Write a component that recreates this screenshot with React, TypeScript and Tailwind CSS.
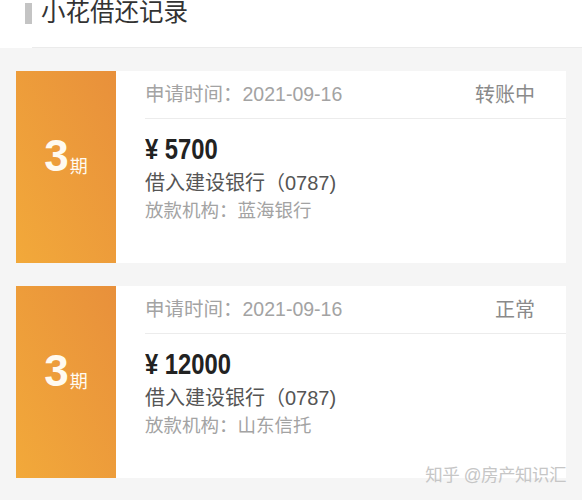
const records = [
  { date: "2021-09-16", status: "转账中", amount: "5700", bank: "借入建设银行（0787)", org: "蓝海银行" },
  { date: "2021-09-16", status: "正常", amount: "12000", bank: "借入建设银行（0787)", org: "山东信托" },
];

const cjk = "font-['Liberation_Sans','Noto_Sans_CJK_SC',sans-serif]";

function RecordCard({ r }: { r: (typeof records)[number] }) {
  return (
    <div className="flex h-[192px]">
      <div className="w-[100px] bg-gradient-to-bl from-[#e8903b] to-[#f2a93a] flex items-center justify-center pb-[22px]">
        <span className="text-[#fffaf0] text-[44px] leading-none font-bold font-['Liberation_Sans',sans-serif]">3</span>
        <span className="text-[#fffaf0] text-[18px] leading-none mt-[22px] ml-[1px]">期</span>
      </div>
      <div className="flex-1 bg-white pl-[29px]">
        <div className="h-[48px] flex items-center justify-between border-b border-[#ececec] pr-[31px]">
          <span className="text-[19.5px] text-[#a3a3a3]">申请时间：{r.date}</span>
          <span className="text-[20px] text-[#8a8a8a]">{r.status}</span>
        </div>
        <div className="pt-[13px]">
          <div className="text-[29px] leading-[34px] font-bold text-[#222] font-['Liberation_Sans',sans-serif] origin-left scale-x-[0.82] whitespace-nowrap">
            ¥ {r.amount}
          </div>
          <div className="text-[20px] leading-[28px] text-[#555] mt-[3px]">{r.bank}</div>
          <div className="text-[18.5px] leading-[28px] text-[#a3a3a3]">放款机构：{r.org}</div>
        </div>
      </div>
    </div>
  );
}

export default function App() {
  return (
    <div className={`relative w-[582px] h-[500px] bg-[#f5f5f5] overflow-hidden ${cjk}`}>
      <div className="bg-white h-[48px]">
        <div className="h-[47px] flex items-start pl-[25px] pt-[3px]">
          <span className="w-[7px] h-[21px] bg-[#c4c4c4]" />
          <span className="ml-[9px] text-[24.5px] leading-[20px] text-[#333]">小花借还记录</span>
        </div>
        <div className="ml-[32px] border-t border-[#ebebeb]" />
      </div>
      <div className="flex flex-col gap-[23px] pt-[23px] px-[16px]">
        {records.map((r, i) => (
          <RecordCard key={i} r={r} />
        ))}
      </div>
      <div className="absolute right-[16px] top-[462px] text-[17.5px] text-[#c6c6c6] tracking-[-0.5px]">
        知乎 @房产知识汇
      </div>
    </div>
  );
}
